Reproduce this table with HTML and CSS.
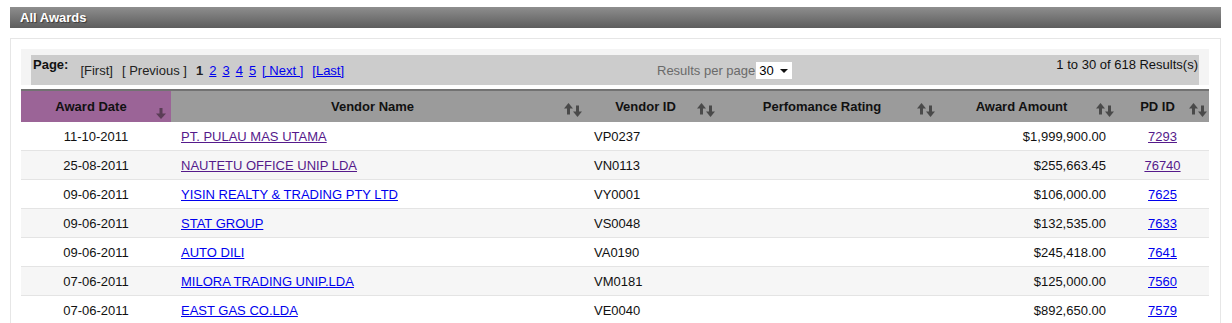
FILE: index.html
```html
<!DOCTYPE html>
<html>
<head>
<meta charset="utf-8">
<title>All Awards</title>
<link rel="stylesheet" href="styles.css">
</head>
<body>
<div class="page">
  <div class="titlebar">All Awards</div>
  <div class="panel">
    <div class="pager-wrap">
      <div class="pager">
        <div class="pages">
          <b class="label">Page:</b>
          <span class="nav">
            <span class="item">[First]</span>
            <span class="item">[ Previous ]</span>
            <b class="num">1</b>
            <a class="num" href="#">2</a>
            <a class="num" href="#">3</a>
            <a class="num" href="#">4</a>
            <a class="num" href="#">5</a>
            <a class="item" href="#">[ Next ]</a>
            <a class="item" href="#">[Last]</a>
          </span>
        </div>
        <div class="perpage">Results per page<span class="select">30<i class="caret"></i></span></div>
        <div class="count">1 to 30 of 618 Results(s)</div>
      </div>
    </div>
    <table class="grid">
      <colgroup>
        <col class="c-date"><col class="c-name"><col class="c-id"><col class="c-rating"><col class="c-amount"><col class="c-pd">
      </colgroup>
      <thead>
        <tr>
          <th class="sorted">Award Date<svg class="arrow-down" viewBox="0 0 10 11" width="10" height="11"><rect x="3.5" y="0" width="3" height="6.5"/><polygon points="0,5.5 5,11 10,5.5"/></svg></th>
          <th>Vendor Name<svg class="sort" viewBox="0 0 18 14" width="18" height="14"><polygon points="0,5.5 4.5,0 9,5.5"/><rect x="3" y="4" width="3" height="7.5"/><rect x="12" y="2.5" width="3" height="7.5"/><polygon points="9,8.5 13.5,14 18,8.5"/></svg></th>
          <th>Vendor ID<svg class="sort" viewBox="0 0 18 14" width="18" height="14"><polygon points="0,5.5 4.5,0 9,5.5"/><rect x="3" y="4" width="3" height="7.5"/><rect x="12" y="2.5" width="3" height="7.5"/><polygon points="9,8.5 13.5,14 18,8.5"/></svg></th>
          <th>Perfomance Rating<svg class="sort" viewBox="0 0 18 14" width="18" height="14"><polygon points="0,5.5 4.5,0 9,5.5"/><rect x="3" y="4" width="3" height="7.5"/><rect x="12" y="2.5" width="3" height="7.5"/><polygon points="9,8.5 13.5,14 18,8.5"/></svg></th>
          <th>Award Amount<svg class="sort" viewBox="0 0 18 14" width="18" height="14"><polygon points="0,5.5 4.5,0 9,5.5"/><rect x="3" y="4" width="3" height="7.5"/><rect x="12" y="2.5" width="3" height="7.5"/><polygon points="9,8.5 13.5,14 18,8.5"/></svg></th>
          <th>PD ID<svg class="sort" viewBox="0 0 18 14" width="18" height="14"><polygon points="0,5.5 4.5,0 9,5.5"/><rect x="3" y="4" width="3" height="7.5"/><rect x="12" y="2.5" width="3" height="7.5"/><polygon points="9,8.5 13.5,14 18,8.5"/></svg></th>
        </tr>
      </thead>
      <tbody>
        <tr><td class="date">11-10-2011</td><td class="name"><a class="visited" href="#">PT. PULAU MAS UTAMA</a></td><td class="vid">VP0237</td><td></td><td class="amount">$1,999,900.00</td><td class="pd"><a class="visited" href="#">7293</a></td></tr>
        <tr><td class="date">25-08-2011</td><td class="name"><a class="visited" href="#">NAUTETU OFFICE UNIP LDA</a></td><td class="vid">VN0113</td><td></td><td class="amount">$255,663.45</td><td class="pd"><a class="visited" href="#">76740</a></td></tr>
        <tr><td class="date">09-06-2011</td><td class="name"><a href="#">YISIN REALTY &amp; TRADING PTY LTD</a></td><td class="vid">VY0001</td><td></td><td class="amount">$106,000.00</td><td class="pd"><a href="#">7625</a></td></tr>
        <tr><td class="date">09-06-2011</td><td class="name"><a href="#">STAT GROUP</a></td><td class="vid">VS0048</td><td></td><td class="amount">$132,535.00</td><td class="pd"><a href="#">7633</a></td></tr>
        <tr><td class="date">09-06-2011</td><td class="name"><a href="#">AUTO DILI</a></td><td class="vid">VA0190</td><td></td><td class="amount">$245,418.00</td><td class="pd"><a href="#">7641</a></td></tr>
        <tr><td class="date">07-06-2011</td><td class="name"><a href="#">MILORA TRADING UNIP.LDA</a></td><td class="vid">VM0181</td><td></td><td class="amount">$125,000.00</td><td class="pd"><a href="#">7560</a></td></tr>
        <tr><td class="date">07-06-2011</td><td class="name"><a href="#">EAST GAS CO.LDA</a></td><td class="vid">VE0040</td><td></td><td class="amount">$892,650.00</td><td class="pd"><a href="#">7579</a></td></tr>
      </tbody>
    </table>
  </div>
</div>
</body>
</html>
```

FILE: styles.css
```css
html, body {
  margin: 0;
  padding: 0;
  background: #ffffff;
}
body {
  font-family: "Liberation Sans", Arial, sans-serif;
  font-size: 13px;
  color: #111111;
}
.page {
  padding: 7px 11px 0 10px;
}
.titlebar {
  height: 21px;
  line-height: 21px;
  padding-left: 10px;
  background: linear-gradient(#8e8e8e, #5d5d5d);
  color: #ffffff;
  font-weight: bold;
  font-size: 13px;
  text-shadow: 1px 1px 1px #3a3a3a;
}
.panel {
  margin-top: 10px;
  border: 1px solid #e6e6e6;
  border-bottom: 0;
  padding: 10px 11px 0 10px;
}
.pager-wrap {
  width: 1188px;
  box-sizing: border-box;
  background: #f4f4f4;
  padding: 6px 10px 0 10px;
}
.pager {
  display: flex;
  height: 30px;
  background: #cccccc;
  font-size: 13px;
  color: #222222;
}
.pages {
  flex: 0 0 626px;
  display: flex;
  align-items: flex-start;
}
.label {
  margin: 2px 0 0 2px;
  font-weight: bold;
  color: #111111;
}
.nav {
  display: flex;
  align-items: center;
  height: 30px;
  margin-left: 12px;
}
.nav .item {
  margin-right: 9px;
}
.nav .num {
  margin-right: 6px;
}
.pager a {
  color: #0000ee;
  text-decoration: underline;
}
.perpage {
  display: flex;
  align-items: center;
  height: 30px;
  color: #6a6a6a;
}
.select {
  display: inline-flex;
  align-items: center;
  box-sizing: border-box;
  width: 36px;
  height: 17px;
  margin-left: 1px;
  padding-left: 3px;
  background: #ffffff;
  color: #000000;
  font-size: 13px;
}
.caret {
  display: inline-block;
  width: 0;
  height: 0;
  margin-left: 6px;
  margin-top: 1px;
  border-left: 4px solid transparent;
  border-right: 4px solid transparent;
  border-top: 4px solid #111111;
}
.count {
  margin-left: auto;
  padding: 2px 1px 0 0;
  color: #111111;
}
.grid {
  width: 1188px;
  margin-top: 4px;
  border-collapse: collapse;
  table-layout: fixed;
}
.c-date { width: 150px; }
.c-name { width: 413px; }
.c-id { width: 133px; }
.c-rating { width: 220px; }
.c-amount { width: 179px; }
.c-pd { width: 93px; }
.grid th {
  position: relative;
  height: 32px;
  padding: 0 10px 0 0;
  background: #9b9b9b;
  border-top: 2px solid #727272;
  font-size: 13px;
  font-weight: bold;
  color: #111111;
  text-align: center;
  vertical-align: middle;
  box-sizing: border-box;
}
.grid th.sorted {
  background: #9b6497;
}
.grid th .sort {
  position: absolute;
  right: 2px;
  top: 12px;
  fill: #4a4a4a;
}
.grid th .arrow-down {
  position: absolute;
  right: 5px;
  top: 17px;
  fill: #5a3d56;
}
.grid td {
  height: 28px;
  padding: 0;
  border-bottom: 1px solid #e4e4e4;
  color: #111111;
  font-size: 13px;
  vertical-align: middle;
  white-space: nowrap;
}
.grid tbody tr:nth-child(even) td {
  background: #f6f6f6;
}
.grid td.date {
  text-align: center;
}
.grid td.name,
.grid td.vid {
  padding-left: 10px;
}
.grid td.amount {
  text-align: right;
  padding-right: 10px;
}
.grid td.pd {
  text-align: center;
}
.grid a {
  color: #0000ee;
  text-decoration: underline;
}
.grid a.visited {
  color: #551a8b;
}
```
